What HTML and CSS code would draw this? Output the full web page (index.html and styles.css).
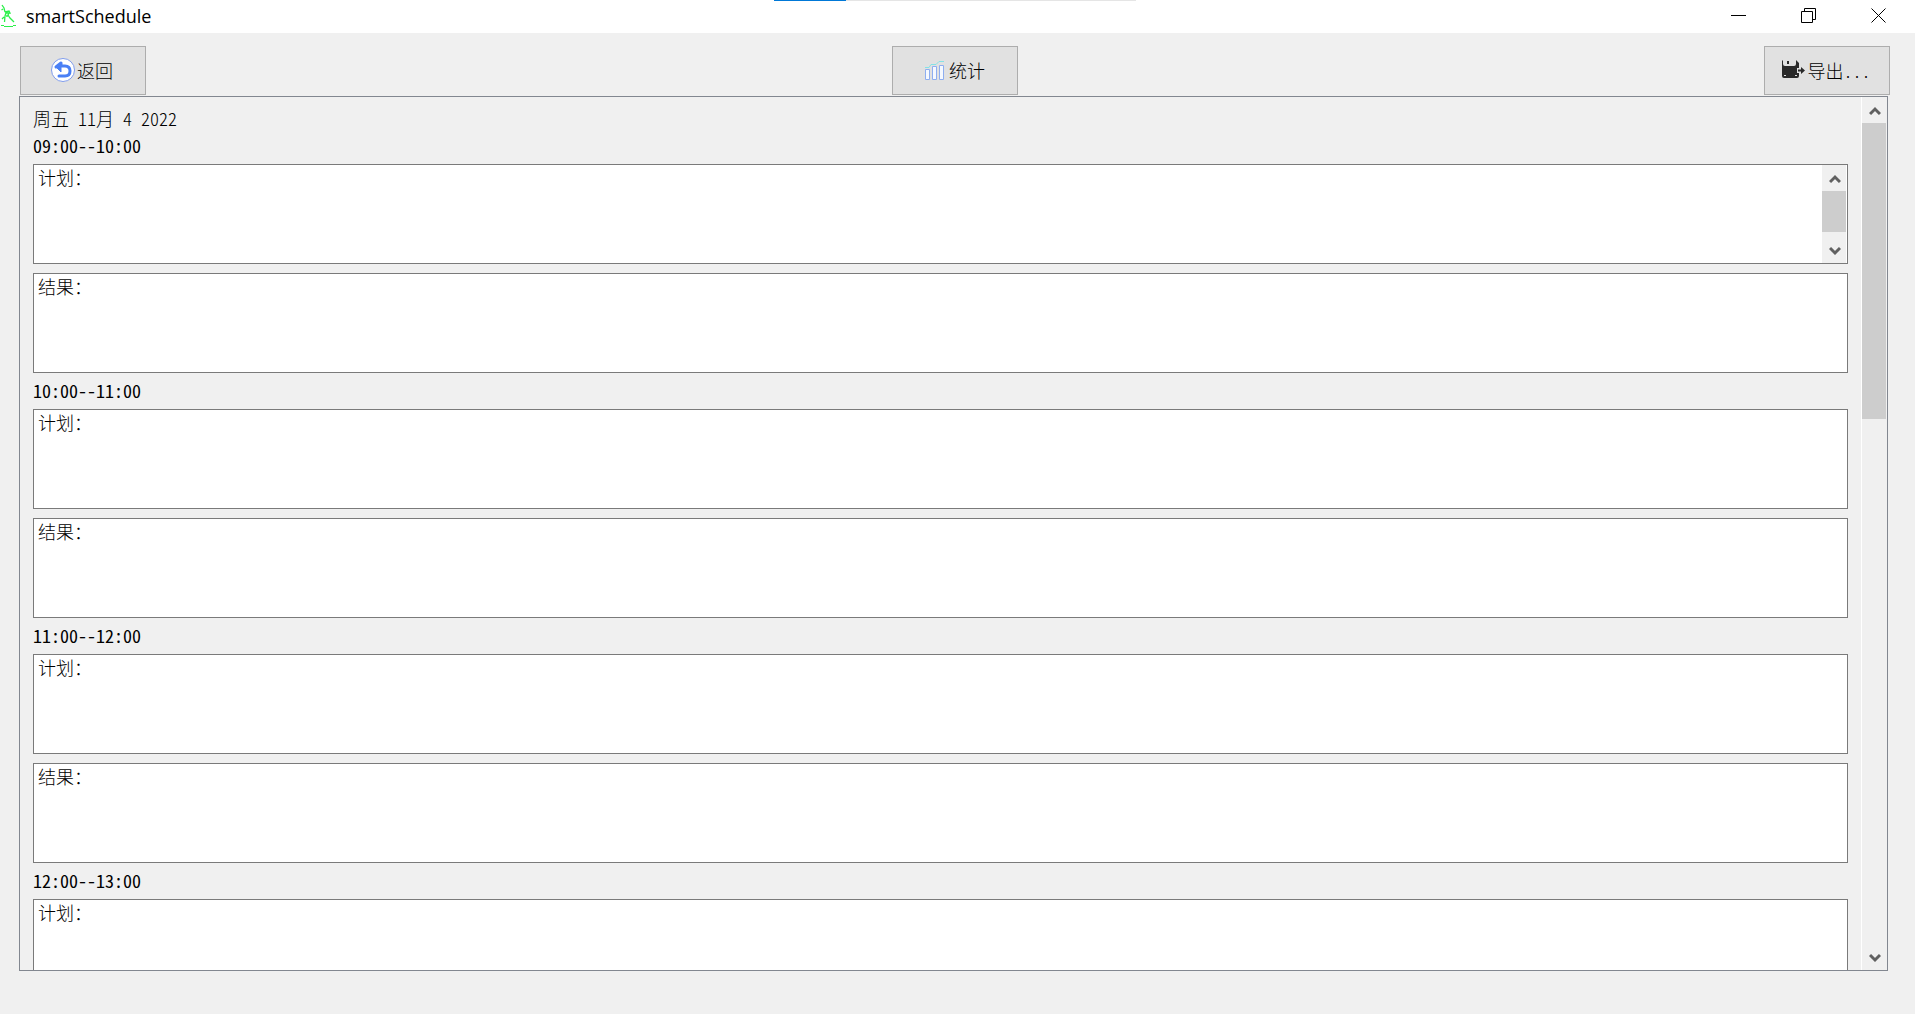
FILE: index.html
```
<!DOCTYPE html>
<html lang="zh-CN">
<head>
    <meta charset="UTF-8">
    <meta name="viewport" content="width=device-width, initial-scale=1.0">
    <title>smartSchedule</title>
    <link rel="stylesheet" href="styles.css">
</head>
<body>
    <header class="titlebar">
        <div class="loading"><div class="loading-value"></div></div>
        <svg class="app-icon" width="18" height="25" viewBox="0 0 18 25" fill="none" stroke="#2bf04a">
            <path d="M2 1L4 4L5 8M3 5L1.500 6M5 8L9 7L10 9L6 9L5 12L4.500 18M9 9L8 11L10 14L14 18M6 12L8 12M4 13L2 15" stroke-width="1.3"/>
            <path d="M1 21.500H4M4 22.500H13M13 21.500H16"/>
        </svg>
        <h1>smartSchedule</h1>
        <div class="window-controls">
            <button type="button" aria-label="最小化">
                <svg width="16" height="16" viewBox="0 0 16 16"><path d="M0 7.5H15"/></svg>
            </button>
            <button type="button" aria-label="还原">
                <svg width="16" height="16" viewBox="0 0 16 16"><path d="M.5 3.5H11.5V14.5H.5ZM3.5 3.5V.5H14.5V11.5H11.5"/></svg>
            </button>
            <button type="button" aria-label="关闭">
                <svg width="16" height="16" viewBox="0 0 16 16"><path d="M.5 .5L14.5 14.5M14.5 .5L.5 14.5"/></svg>
            </button>
        </div>
    </header>

    <nav class="toolbar">
        <button type="button">
            <svg width="24" height="24" viewBox="0 0 24 24">
                <circle cx="12" cy="12" r="11.5" fill="#fff" stroke="#7f9bea"/>
                <path d="M5 9L10 5V8H14Q19 8 19 13Q19 18 14 18H8" fill="none" stroke="#4a80f5" stroke-width="3" stroke-linejoin="round" stroke-linecap="round"/>
                <path d="M5 9L10 4V14Z" fill="#4a80f5" stroke="#4a80f5" stroke-linejoin="round"/>
            </svg>
            <span>返回</span>
        </button>
        <button type="button">
            <svg width="24" height="24" viewBox="0 0 24 24" fill="#f5f9ff" stroke="#8eaef0">
                <path d="M2.500 11.500H6.500V21.500H2.500ZM9.500 8.500H13.500V21.500H9.500ZM16.500 7.500H20.500V21.500H16.500Z"/>
                <path d="M2 9.500H6L8 6.500H13L16 3.500H21" fill="none" stroke="#84e3e6"/>
            </svg>
            <span>统计</span>
        </button>
        <button type="button">
            <svg width="24" height="24" viewBox="0 0 24 24" fill="#292929">
                <path d="M0 3L1 2V6Q1 8 3 8H12Q14 8 14 6V2L17 5V10H15V15H17V18Q17 20 15 20H2Q0 20 0 18ZM5 3H7V6H5Z"/>
                <path d="M16 11.500H19V9L23 12.500L19 16V13.500H16Z"/>
                <path d="M2 17H4V18H2ZM13 17H15V18H13Z" fill="#e1e1e1"/>
            </svg>
            <span>导出...</span>
        </button>
    </nav>

    <main class="panel">
        <div class="schedule">
            <h2>周五 11月 4 2022</h2>

            <h3>09:00--10:00</h3>
            <div class="entry">
                <textarea aria-label="09:00 计划">计划：</textarea>
                <div class="scrollbar">
                    <button type="button" aria-label="向上"><svg width="12" height="10" viewBox="0 0 12 10"><path d="M1 8L6 3L11 8"/></svg></button>
                    <div class="track"><div class="thumb thumb-entry"></div></div>
                    <button type="button" aria-label="向下"><svg width="12" height="10" viewBox="0 0 12 10"><path d="M1 2L6 7L11 2"/></svg></button>
                </div>
            </div>
            <div class="entry"><textarea aria-label="09:00 结果">结果：</textarea></div>

            <h3>10:00--11:00</h3>
            <div class="entry"><textarea aria-label="10:00 计划">计划：</textarea></div>
            <div class="entry"><textarea aria-label="10:00 结果">结果：</textarea></div>

            <h3>11:00--12:00</h3>
            <div class="entry"><textarea aria-label="11:00 计划">计划：</textarea></div>
            <div class="entry"><textarea aria-label="11:00 结果">结果：</textarea></div>

            <h3>12:00--13:00</h3>
            <div class="entry"><textarea aria-label="12:00 计划">计划：</textarea></div>
        </div>
        <div class="scrollbar scrollbar-panel">
            <button type="button" aria-label="向上"><svg width="12" height="10" viewBox="0 0 12 10"><path d="M1 8L6 3L11 8"/></svg></button>
            <div class="track"><div class="thumb thumb-panel"></div></div>
            <button type="button" aria-label="向下"><svg width="12" height="10" viewBox="0 0 12 10"><path d="M1 2L6 7L11 2"/></svg></button>
        </div>
    </main>
</body>
</html>
```
FILE: styles.css
```
* {
    box-sizing: border-box;
}
body {
    margin: 0;
    height: 100vh;
    display: flex;
    flex-direction: column;
    overflow: hidden;
    background-color: #f0f0f0;
    color: #000;
    font-family: "Noto Sans CJK SC", sans-serif;
    font-size: 18px;
    font-weight: 300;
    line-height: 18px;
    /* half-width latin, two letters per chinese character */
    font-feature-settings: "hwid";
}
h1, h2, h3 {
    margin: 0;
    font-size: inherit;
    font-weight: inherit;
}
button, textarea {
    font: inherit;
    font-feature-settings: inherit;
    color: inherit;
    margin: 0;
}

/* title bar */
.titlebar {
    position: relative;
    display: flex;
    align-items: center;
    flex: none;
    height: 33px;
    background-color: #fff;
}
.titlebar h1 {
    flex: 1;
    margin-left: 8px;
    padding-bottom: 2px;
    font-family: "Open Sans", sans-serif;
    font-size: 18px;
    font-weight: 400;
    font-feature-settings: normal;
}
.loading {
    position: absolute;
    top: 0;
    left: calc(50% - 184px);
    width: 362px;
    height: 1px;
    background-color: #e5e5e5;
}
.loading-value {
    width: 20%;
    height: 1px;
    background-color: #0078d7;
}
.window-controls {
    display: flex;
    margin-right: 1px;
}
.window-controls button {
    display: flex;
    align-items: center;
    justify-content: center;
    width: 70px;
    height: 33px;
    padding: 0 0 2px;
    border: none;
    background: none;
}
.window-controls path {
    fill: none;
    stroke: #000;
}

/* toolbar */
.toolbar {
    display: flex;
    justify-content: space-between;
    flex: none;
    padding: 13px 25px 1px 20px;
}
.toolbar button {
    display: flex;
    align-items: center;
    justify-content: center;
    gap: 2px;
    width: 126px;
    height: 49px;
    padding: 0 2px 2px 0;
    border: 1px solid #adadad;
    background-color: #e1e1e1;
}

/* schedule */
.panel {
    display: flex;
    flex: 1;
    min-height: 0;
    margin: 0 27px 43px 19px;
    border: 1px solid #828790;
    overflow: hidden;
}
.schedule {
    display: flex;
    flex-direction: column;
    flex: 1;
    gap: 9px;
    padding: 13px;
}
.schedule h2, .schedule h3 {
    line-height: 16px;
    padding-bottom: 2px;
}
.schedule h3 {
    font-weight: 400;
}
.entry {
    display: flex;
    flex: none;
    height: 100px;
    border: 1px solid #7a7a7a;
    background-color: #fff;
}
.entry textarea {
    flex: 1;
    padding: 3px 4px;
    border: none;
    outline: none;
    background: none;
    resize: none;
    overflow: hidden;
}

/* scrollbars */
.scrollbar {
    display: flex;
    flex-direction: column;
    flex: none;
    width: 24px;
    margin-right: 1px;
    background-color: #f0f0f0;
}
.scrollbar-panel {
    width: 25px;
    border-left: 1px solid #fff;
}
.scrollbar button {
    display: flex;
    align-items: center;
    justify-content: center;
    flex: none;
    height: 26px;
    padding: 2px 0 0 1px;
    border: none;
    background: none;
}
.scrollbar path {
    fill: none;
    stroke: #606060;
    stroke-width: 3;
}
.track {
    flex: 1;
}
.thumb {
    background-color: #cdcdcd;
}
.thumb-entry {
    height: 90%;
}
.thumb-panel {
    height: 36%;
}
```
